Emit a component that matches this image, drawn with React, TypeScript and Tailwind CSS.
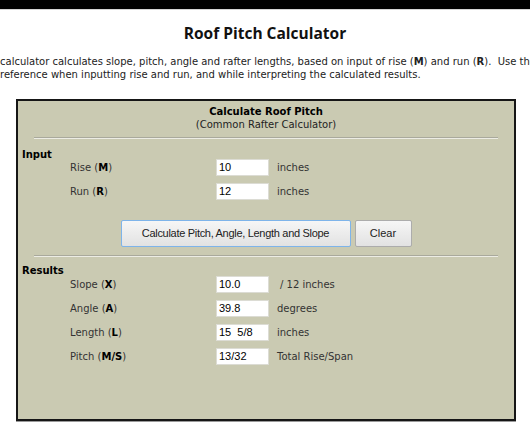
import React from 'react';

const verdana = "font-['DejaVu_Sans',Verdana,sans-serif]";
const arial = "font-['Liberation_Sans',Arial,sans-serif]";

type Row = { label: string; key: string; value: string; unit: string; indent?: boolean };

const inputs: Row[] = [
  { label: 'Rise', key: 'M', value: '10', unit: 'inches' },
  { label: 'Run', key: 'R', value: '12', unit: 'inches' },
];

const results: Row[] = [
  { label: 'Slope', key: 'X', value: '10.0', unit: '/ 12 inches', indent: true },
  { label: 'Angle', key: 'A', value: '39.8', unit: 'degrees' },
  { label: 'Length', key: 'L', value: '15  5/8', unit: 'inches' },
  { label: 'Pitch', key: 'M/S', value: '13/32', unit: 'Total Rise/Span' },
];

function FieldRow({ row }: { row: Row }) {
  return (
    <div className="flex h-[24px] items-center">
      <div className="w-[198px] pl-[52px] text-[10px] text-[#333]">
        {row.label} (<b className="text-black">{row.key}</b>)
      </div>
      <input
        readOnly
        value={row.value}
        className={`${arial} h-[17px] w-[53px] border border-[#dcdcd4] bg-white px-[2px] text-[11px] text-black outline-none whitespace-pre`}
      />
      <div className={`ml-[8px] text-[10px] text-[#333] ${row.indent ? 'pl-[3px]' : ''}`}>{row.unit}</div>
    </div>
  );
}

function Divider() {
  return <div className="mx-4 border-t border-b border-t-[#a9a99c] border-b-[#ececE4]" />;
}

export default function App() {
  return (
    <div className={`${verdana} relative h-[424px] w-[530px] overflow-hidden bg-white`}>
      <div className="h-[9px] bg-black" />
      <div className="h-px bg-[#d4d4d4]" />

      <h1 className="pt-[13px] text-center font-['Open_Sans',sans-serif] text-[15.5px] font-bold leading-[20px] text-[#111]">
        Roof Pitch Calculator
      </h1>

      <div className="mt-[12px] overflow-hidden whitespace-nowrap text-[10px] leading-[13px] text-[#222]">
        <p>
          calculator calculates slope, pitch, angle and rafter lengths, based on input of rise (<b>M</b>) and run (<b>R</b>).&nbsp; Use the diagram
        </p>
        <p>reference when inputting rise and run, and while interpreting the calculated results.</p>
      </div>

      <div className="ml-[16px] mt-[18px] h-[322px] w-[500px] border-2 border-[#161616] bg-[#cacab2] shadow-[0_1px_0_#9a9a9a] text-[10px]">
        <div className="pt-[4px] text-center leading-[13px] text-[#222]">
          <div className="font-bold text-black">Calculate Roof Pitch</div>
          <div>(Common Rafter Calculator)</div>
        </div>
        <div className="mt-[6px]">
          <Divider />
        </div>

        <div className="mt-[9px] h-[13px] pl-[4px] font-bold leading-[13px] text-black">Input</div>
        <div className="-mt-[6px]">
          {inputs.map((r) => (
            <FieldRow key={r.label} row={r} />
          ))}
        </div>

        <div className="mt-[17px] flex justify-center gap-[4px]">
          <button
            className={`${arial} h-[27px] w-[230px] rounded-[2px] border border-[#7eb4ea] bg-gradient-to-b from-[#f6f6f6] to-[#e2e2e2] text-[11px] tracking-[-0.3px] text-[#222]`}
          >
            Calculate Pitch, Angle, Length and Slope
          </button>
          <button
            className={`${arial} h-[27px] w-[57px] rounded-[2px] border border-[#acacac] bg-gradient-to-b from-[#f6f6f6] to-[#e2e2e2] text-[11px] text-[#222]`}
          >
            Clear
          </button>
        </div>

        <div className="mt-[8px]">
          <Divider />
        </div>

        <div className="mt-[7px] h-[13px] pl-[4px] font-bold leading-[13px] text-black">Results</div>
        <div className="-mt-[5px]">
          {results.map((r) => (
            <FieldRow key={r.label} row={r} />
          ))}
        </div>
      </div>
    </div>
  );
}
